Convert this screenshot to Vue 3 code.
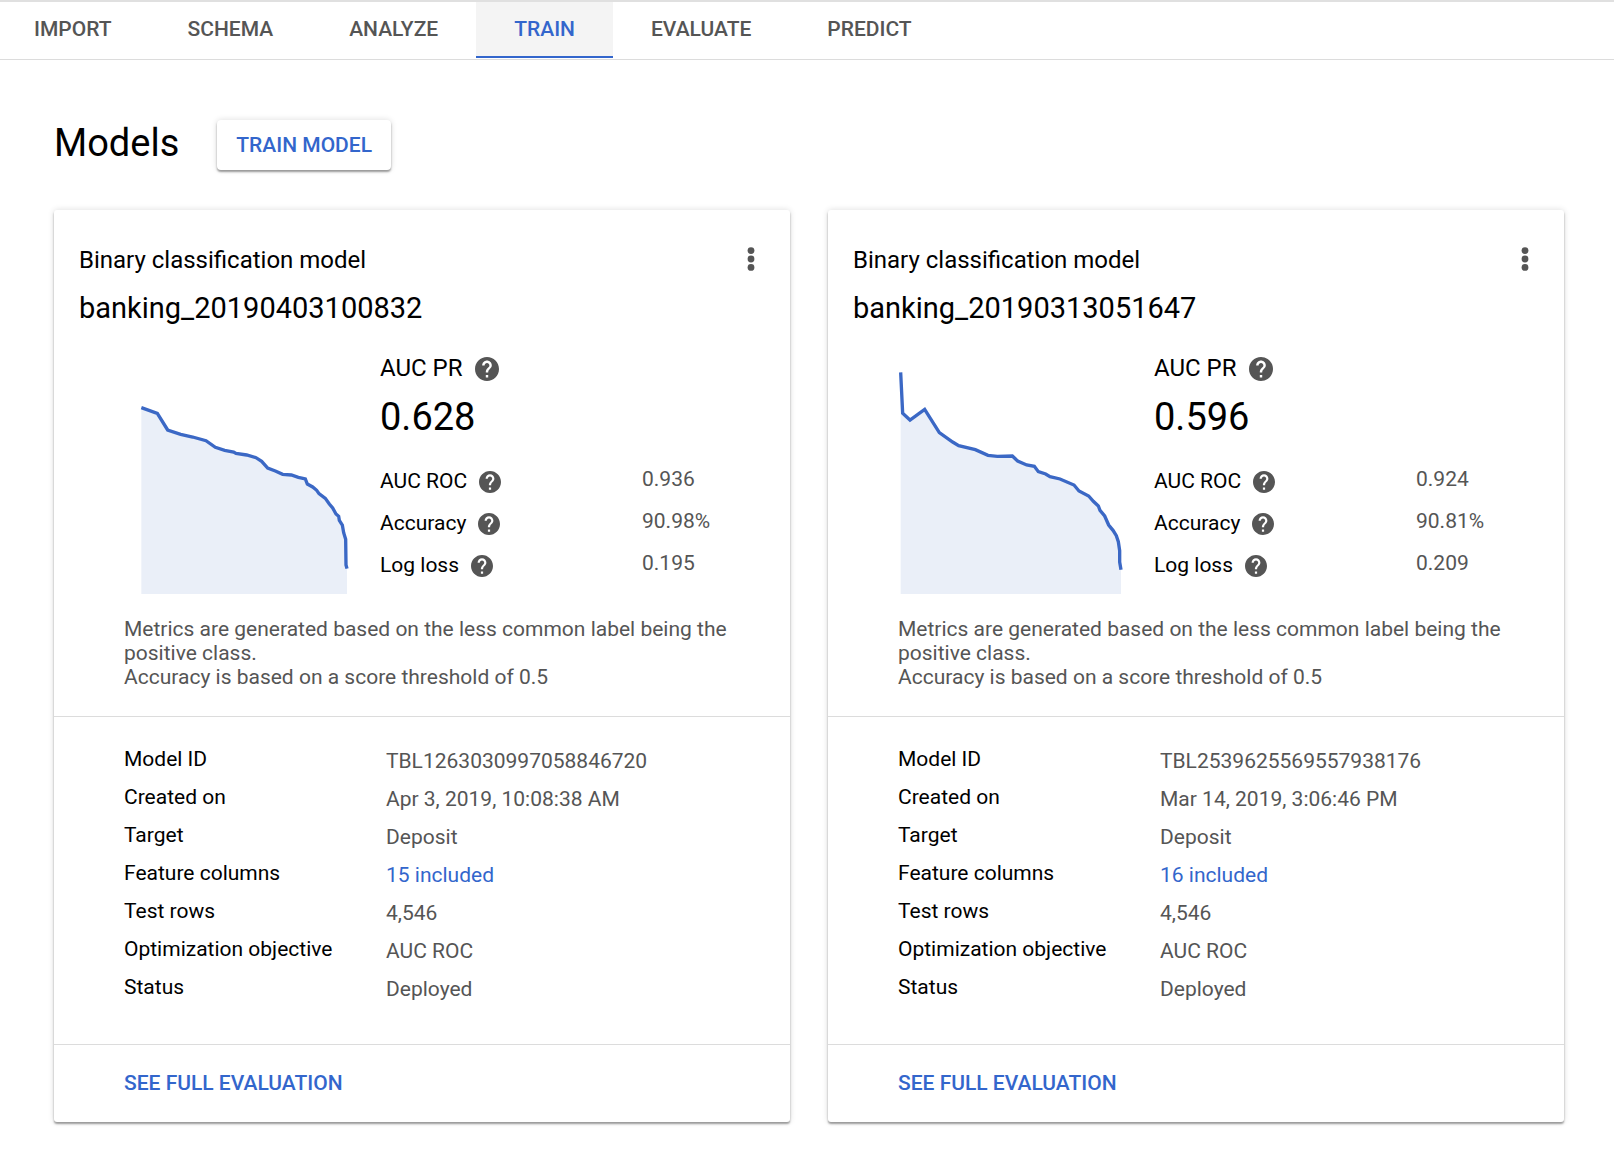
<script setup>
const tabs = ['IMPORT', 'SCHEMA', 'ANALYZE', 'TRAIN', 'EVALUATE', 'PREDICT']
const activeTab = 'TRAIN'

const models = [
  {
    name: 'banking_20190403100832',
    aucPr: '0.628',
    metrics: [
      { label: 'AUC ROC', value: '0.936' },
      { label: 'Accuracy', value: '90.98%' },
      { label: 'Log loss', value: '0.195' },
    ],
    curve:
      '52,161 100,178 131,228 170,241 206,249 246,260 274,280 302,289 329,294 336,298 368,303 396,311 413,322 431,342 454,351 476,361 502,363 523,370 544,375 550,390 566,399 578,409 585,419 604,433 616,450 626,462 636,480 644,487 646,499 655,513 659,536 665,556 666,633 669,644',
    start: 52,
    details: [
      { label: 'Model ID', value: 'TBL1263030997058846720' },
      { label: 'Created on', value: 'Apr 3, 2019, 10:08:38 AM' },
      { label: 'Target', value: 'Deposit' },
      { label: 'Feature columns', value: '15 included', link: true },
      { label: 'Test rows', value: '4,546' },
      { label: 'Optimization objective', value: 'AUC ROC' },
      { label: 'Status', value: 'Deployed' },
    ],
  },
  {
    name: 'banking_20190313051647',
    aucPr: '0.596',
    metrics: [
      { label: 'AUC ROC', value: '0.924' },
      { label: 'Accuracy', value: '90.81%' },
      { label: 'Log loss', value: '0.209' },
    ],
    curve:
      '8,55 14,178 36,198 80,166 124,236 164,264 182,275 232,287 270,304 298,307 343,306 359,321 386,333 409,337 421,353 443,360 456,368 486,375 528,393 543,411 572,426 586,442 601,456 606,469 620,486 632,513 645,529 655,545 661,563 665,590 665,624 669,647',
    start: 8,
    details: [
      { label: 'Model ID', value: 'TBL2539625569557938176' },
      { label: 'Created on', value: 'Mar 14, 2019, 3:06:46 PM' },
      { label: 'Target', value: 'Deposit' },
      { label: 'Feature columns', value: '16 included', link: true },
      { label: 'Test rows', value: '4,546' },
      { label: 'Optimization objective', value: 'AUC ROC' },
      { label: 'Status', value: 'Deployed' },
    ],
  },
]

const helpPath =
  'M12 2C6.48 2 2 6.48 2 12s4.48 10 10 10 10-4.48 10-10S17.52 2 12 2zm1 17h-2v-2h2v2zm2.07-7.75l-.9.92C13.45 12.9 13 13.5 13 15h-2v-.5c0-1.1.45-2.1 1.17-2.83l1.24-1.26c.37-.36.59-.86.59-1.41 0-1.1-.9-2-2-2s-2 .9-2 2H8c0-2.21 1.79-4 4-4s4 1.79 4 4c0 .88-.36 1.68-.93 2.25z'
</script>

<template>
  <div class="page">
    <nav class="tabs">
      <a
        v-for="tab in tabs"
        :key="tab"
        href="#"
        class="tab"
        :class="{ active: tab === activeTab }"
        :aria-current="tab === activeTab ? 'page' : undefined"
        >{{ tab }}</a
      >
    </nav>

    <main class="content">
      <header class="heading">
        <h1>Models</h1>
        <button type="button" class="train">TRAIN MODEL</button>
      </header>

      <div class="cards">
        <article v-for="model in models" :key="model.name" class="card">
          <section class="summary">
            <div class="card-head">
              <div>
                <p class="kind">Binary classification model</p>
                <h2>{{ model.name }}</h2>
              </div>
              <button type="button" class="icon-button" aria-label="More actions">
                <svg class="more" viewBox="0 0 24 28">
                  <circle cx="12" cy="4.6" r="3.4" />
                  <circle cx="12" cy="13" r="3.4" />
                  <circle cx="12" cy="21.4" r="3.4" />
                </svg>
              </button>
            </div>

            <div class="stats">
              <svg class="chart" viewBox="0 0 720 720" role="img" aria-label="Precision-recall curve">
                <polygon class="area" :points="`${model.start},720 ${model.curve} 669,720`" />
                <polyline class="line" :points="model.curve" />
              </svg>
              <div class="metrics">
                <div class="primary">
                  <span>AUC PR</span>
                  <button type="button" class="icon-button" aria-label="About AUC PR">
                    <svg class="help large" viewBox="2 2 20 20"><path :d="helpPath" /></svg>
                  </button>
                </div>
                <p class="score">{{ model.aucPr }}</p>
                <dl>
                  <div v-for="m in model.metrics" :key="m.label" class="metric">
                    <dt>
                      <span>{{ m.label }}</span>
                      <button type="button" class="icon-button" :aria-label="`About ${m.label}`">
                        <svg class="help" viewBox="2 2 20 20"><path :d="helpPath" /></svg>
                      </button>
                    </dt>
                    <dd>{{ m.value }}</dd>
                  </div>
                </dl>
              </div>
            </div>

            <p class="note">
              Metrics are generated based on the less common label being the positive class.<br />
              Accuracy is based on a score threshold of 0.5
            </p>
          </section>

          <dl class="details">
            <div v-for="d in model.details" :key="d.label" class="detail">
              <dt>{{ d.label }}</dt>
              <dd>
                <a v-if="d.link" href="#">{{ d.value }}</a>
                <template v-else>{{ d.value }}</template>
              </dd>
            </div>
          </dl>

          <footer class="card-foot">
            <a href="#" class="evaluation">SEE FULL EVALUATION</a>
          </footer>
        </article>
      </div>
    </main>
  </div>
</template>

<style>
body {
  margin: 0;
  background: #fff;
}
</style>

<style scoped>
.page {
  font-family: Roboto, 'Liberation Sans', sans-serif;
  font-size: 21px;
  line-height: 24px;
  color: #000;
}

h1,
h2,
p,
dl,
dd {
  margin: 0;
  font-weight: 400;
}

a {
  color: #3366cc;
  text-decoration: none;
}

button {
  font: inherit;
  border: 0;
  cursor: pointer;
}

.tabs {
  display: flex;
  border-top: 2px solid #e0e0e0;
  border-bottom: 1px solid #dcdcdc;
  padding-bottom: 1px;
}

.tab {
  padding: 0 38px;
  line-height: 54px;
  border-bottom: 2px solid transparent;
  color: #555;
  font-weight: 500;
}

.tab:first-child {
  padding-left: 34px;
}

.tab.active {
  background: #f4f4f4;
  border-bottom-color: #3366cc;
  color: #3366cc;
}

.content {
  padding: 60px 50px 46px 54px;
}

.heading {
  display: flex;
  align-items: flex-start;
  gap: 38px;
  margin-bottom: 40px;
}

h1 {
  font-size: 38px;
  line-height: 46px;
}

.train {
  height: 50px;
  padding: 0 19px;
  border-radius: 4px;
  background: #fff;
  color: #3366cc;
  font-weight: 500;
  box-shadow:
    0 2px 2px rgba(0, 0, 0, 0.36),
    0 0 6px rgba(0, 0, 0, 0.14);
}

.cards {
  display: grid;
  grid-template-columns: 1fr 1fr;
  gap: 38px;
}

.card {
  border-radius: 3px;
  background: #fff;
  box-shadow:
    0 2px 2px rgba(0, 0, 0, 0.36),
    0 0 6px rgba(0, 0, 0, 0.14);
}

.summary {
  padding: 36px 25px 27px;
  border-bottom: 1px solid #dcdcdc;
}

.card-head {
  display: flex;
  justify-content: space-between;
  align-items: flex-start;
}

.kind {
  font-size: 24px;
  line-height: 28px;
  margin-bottom: 16px;
}

h2 {
  font-size: 29px;
  line-height: 36px;
}

.icon-button {
  display: flex;
  padding: 0;
  background: none;
  color: #555;
}

svg {
  display: block;
  fill: currentColor;
}

.more {
  width: 24px;
  height: 28px;
  margin-right: 2px;
}

.stats {
  display: flex;
  gap: 16px;
  margin-top: 28px;
  padding-left: 45px;
}

.chart {
  flex: none;
  width: 240px;
  height: 240px;
}

.area {
  fill: #eaeff8;
}

.line {
  fill: none;
  stroke: #3b68c5;
  stroke-width: 10;
}

.metrics {
  flex: 1;
}

.primary {
  display: flex;
  align-items: center;
  gap: 12px;
  font-size: 24px;
  line-height: 28px;
}

.help {
  width: 22px;
  height: 22px;
  margin-top: 2px;
}

.help.large {
  width: 24px;
  height: 24px;
}

.score {
  margin: 12px 0 20px;
  font-size: 38px;
  line-height: 46px;
}

.metric {
  display: grid;
  grid-template-columns: 262px 1fr;
}

.metric dt {
  display: flex;
  align-items: center;
  gap: 12px;
  line-height: 42px;
}

.metric dd {
  line-height: 38px;
  color: #555;
}

.note {
  margin: 23px 0 0 45px;
  color: #555;
}

.details {
  padding: 25px 45px 36px 70px;
  border-bottom: 1px solid #dcdcdc;
}

.detail {
  display: grid;
  grid-template-columns: 262px 1fr;
}

.detail dt {
  line-height: 34px;
}

.detail dd {
  line-height: 38px;
  color: #555;
}

.card-foot {
  padding: 26px 70px 27px;
}

.evaluation {
  font-weight: 500;
}
</style>
